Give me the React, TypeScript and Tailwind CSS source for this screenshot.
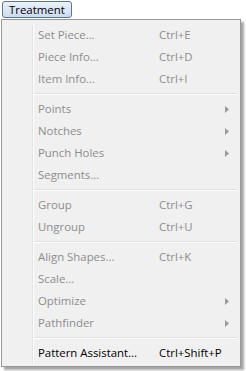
import React from 'react';

type Item =
  | { sep: true }
  | { sep?: false; label: string; shortcut?: string; sub?: boolean; enabled?: boolean };

const items: Item[] = [
  { label: 'Set Piece...', shortcut: 'Ctrl+E' },
  { label: 'Piece Info...', shortcut: 'Ctrl+D' },
  { label: 'Item Info...', shortcut: 'Ctrl+I' },
  { sep: true },
  { label: 'Points', sub: true },
  { label: 'Notches', sub: true },
  { label: 'Punch Holes', sub: true },
  { label: 'Segments...' },
  { sep: true },
  { label: 'Group', shortcut: 'Ctrl+G' },
  { label: 'Ungroup', shortcut: 'Ctrl+U' },
  { sep: true },
  { label: 'Align Shapes...', shortcut: 'Ctrl+K' },
  { label: 'Scale...' },
  { label: 'Optimize', sub: true },
  { label: 'Pathfinder', sub: true },
  { sep: true },
  { label: 'Pattern Assistant...', shortcut: 'Ctrl+Shift+P', enabled: true },
];

const Arrow = () => (
  <svg width="4" height="7" viewBox="0 0 4 7" className="block">
    <path d="M0 0 L4 3.5 L0 7 Z" fill="#9a9a9a" />
  </svg>
);

const App: React.FC = () => {
  return (
    <div
      className="w-[246px] h-[371px] bg-white text-[11.4px] overflow-hidden"
      style={{ fontFamily: '"Open Sans", "Noto Sans", sans-serif' }}
    >
      <div className="h-[19px] pl-[2px] pt-[1px]">
        <div className="inline-flex items-center h-[17px] px-[6px] rounded-[3px] border border-[#5f7593] bg-gradient-to-b from-[#eaf1fa] to-[#cbdcf0] text-black leading-none">
          Treatment
        </div>
      </div>
      <div className="ml-[1px] w-[240px] border border-[#979797] bg-[#f0f0f0] shadow-[3px_3px_2px_rgba(0,0,0,0.35)] relative pt-[4px] pb-[2px] pl-[2px] pr-[2px]">
        <div className="absolute left-[30px] top-[3px] bottom-[3px] w-[2px] border-l border-[#e2e3e3] bg-white" />
        {items.map((it, i) =>
          it.sep ? (
            <div key={i} className="h-[8px] flex items-center pl-[30px] pr-[1px]">
              <div className="w-full h-[2px] border-t border-[#e0e0e0] bg-white" />
            </div>
          ) : (
            <div
              key={i}
              className={`relative h-[22px] flex items-center ${it.enabled ? 'text-black' : 'text-[#8d8d8d]'}`}
            >
              <span className="pl-[34px] w-[155px] whitespace-nowrap">{it.label}</span>
              {it.shortcut && <span className="whitespace-nowrap">{it.shortcut}</span>}
              {it.sub && (
                <span className="absolute left-[221px] top-[8px]">
                  <Arrow />
                </span>
              )}
            </div>
          )
        )}
      </div>
    </div>
  );
};

export default App;
